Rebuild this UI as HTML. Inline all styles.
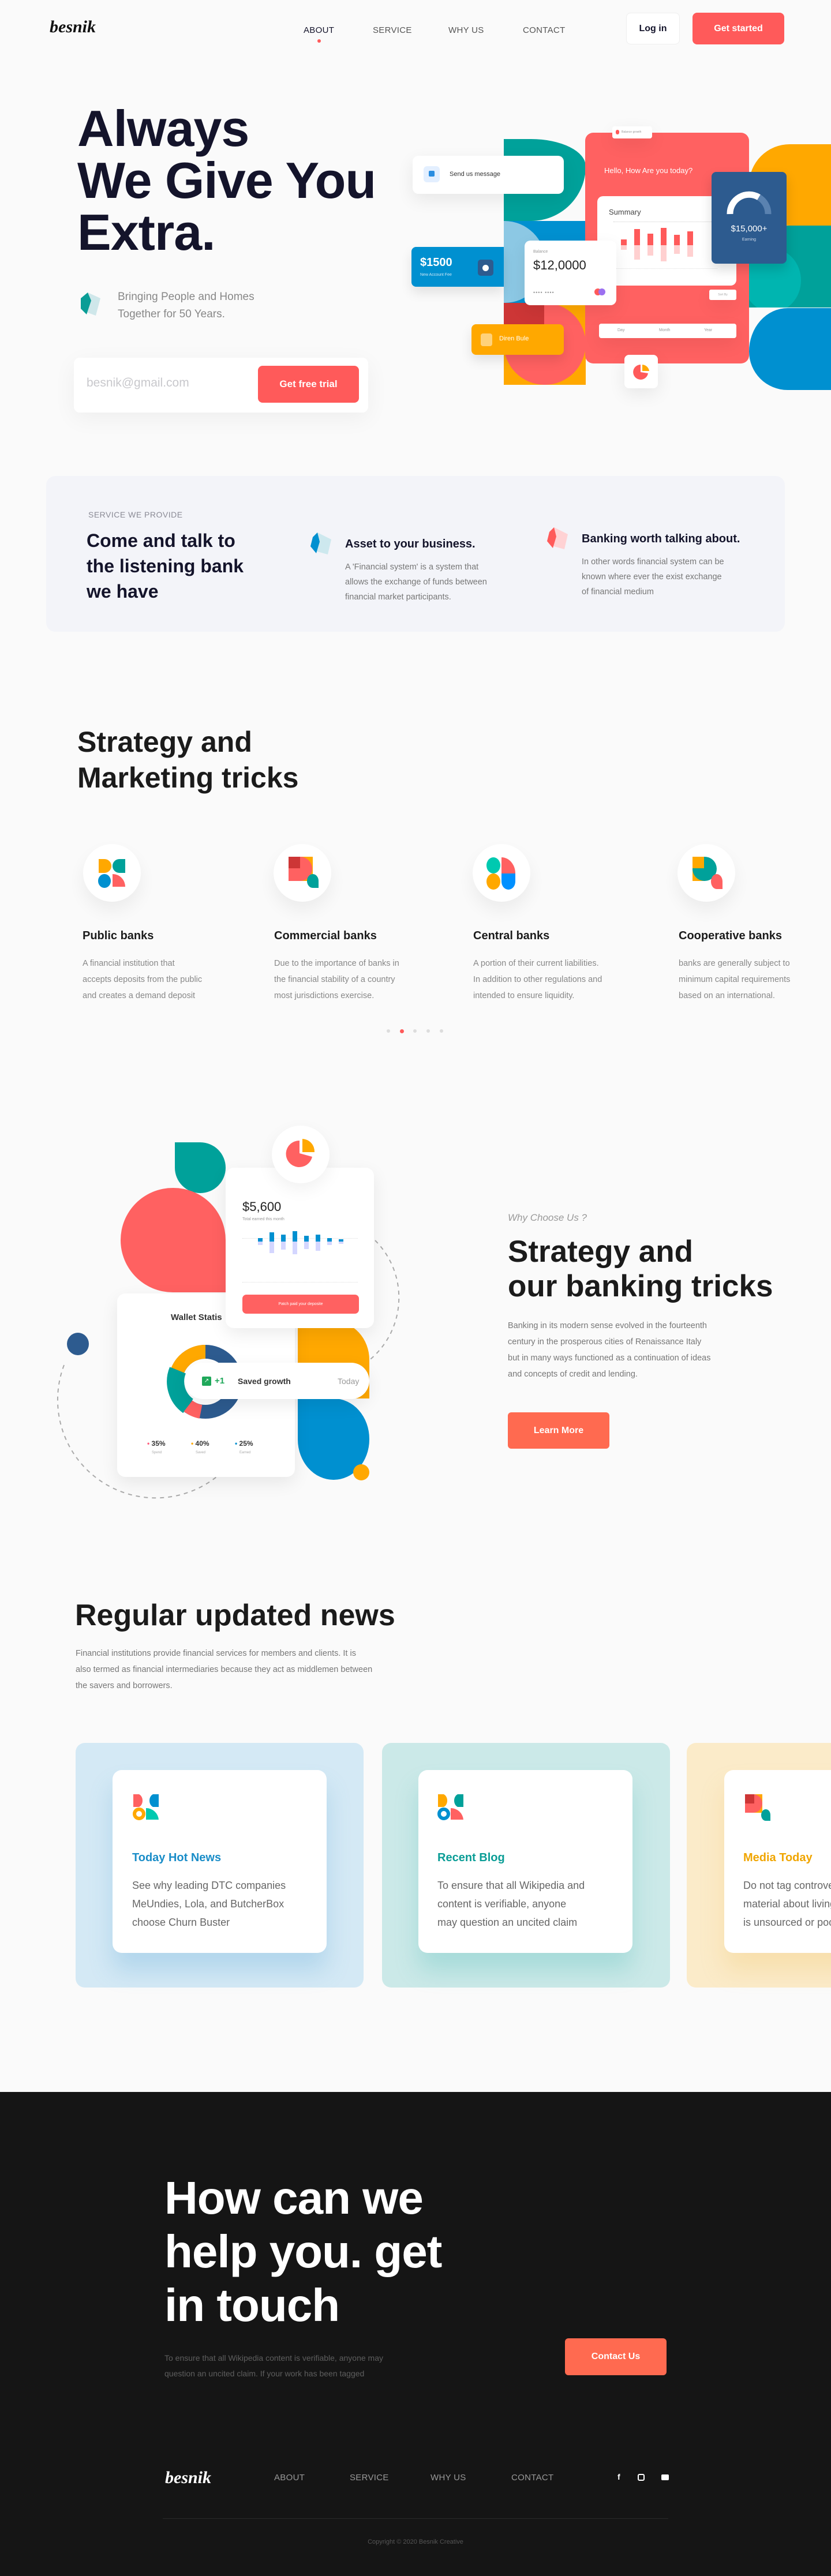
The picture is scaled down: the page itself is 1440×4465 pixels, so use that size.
<!DOCTYPE html>
<html><head><meta charset="utf-8">
<style>
*{margin:0;padding:0;box-sizing:border-box}
body{width:1440px;height:4465px;background:#fafafa;font-family:"Liberation Sans",sans-serif;position:relative;overflow:hidden;color:#14142b}
.a{position:absolute}
.nav{font-size:15px;color:#555;letter-spacing:.3px}
.card{background:#fff;border-radius:10px;box-shadow:0 10px 30px rgba(0,0,0,.08)}
.g{color:#7a7a85}
</style></head><body>

<!-- header -->
<div class="a" style="left:86px;top:30px;font-family:'Liberation Serif',serif;font-style:italic;font-weight:bold;font-size:30px;color:#111">besnik</div>
<div class="a nav" style="left:526px;top:44px;color:#14142b">ABOUT</div>
<div class="a" style="left:550px;top:68px;width:6px;height:6px;border-radius:50%;background:#ff5a5a"></div>
<div class="a nav" style="left:646px;top:44px">SERVICE</div>
<div class="a nav" style="left:777px;top:44px">WHY US</div>
<div class="a nav" style="left:906px;top:44px">CONTACT</div>
<div class="a" style="left:1085px;top:22px;width:93px;height:55px;border:1px solid #eee;border-radius:8px;background:#fff;font-size:16px;font-weight:bold;text-align:center;line-height:53px;color:#14142b">Log in</div>
<div class="a" style="left:1200px;top:22px;width:159px;height:55px;border-radius:8px;background:#ff5a5a;color:#fff;font-size:16px;font-weight:bold;text-align:center;line-height:55px">Get started</div>

<!-- hero -->
<div class="a" style="left:134px;top:178px;font-size:88px;font-weight:bold;line-height:90px;color:#14142b;letter-spacing:-1px">Always<br>We Give You<br>Extra.</div>
<svg class="a" style="left:136px;top:505px" width="42" height="46" viewBox="0 0 42 46"><polygon points="16,2 38,12 30,42 8,34" fill="#cfe7ea"/><polygon points="16,2 22,16 14,40 4,30 4,12" fill="#0a9d96"/></svg>
<div class="a g" style="left:204px;top:500px;font-size:19px;line-height:30px;color:#888">Bringing People and Homes<br>Together for 50 Years.</div>
<div class="a" style="left:128px;top:620px;width:510px;height:95px;background:#fff;border-radius:10px;box-shadow:0 10px 40px rgba(0,0,0,.05)"></div>
<div class="a" style="left:150px;top:652px;font-size:21px;color:#c8c8cc">besnik@gmail.com</div>
<div class="a" style="left:447px;top:634px;width:175px;height:64px;border-radius:8px;background:#ff5a5a;color:#fff;font-size:17px;font-weight:bold;text-align:center;line-height:64px">Get free trial</div>

<!-- hero illustration -->
<div class="a" style="left:873px;top:241px;width:142px;height:142px;background:#00a19a;border-radius:0 142px 142px 0/0 71px 142px 0"></div>
<div class="a" style="left:873px;top:383px;width:142px;height:142px;background:#0090d0;overflow:hidden"><div style="position:absolute;left:-70px;top:0;width:142px;height:142px;border-radius:50%;background:#8cc8e4"></div></div>
<div class="a" style="left:873px;top:525px;width:142px;height:142px;background:#ffa800;overflow:hidden"><div style="position:absolute;left:0;top:0;width:142px;height:142px;border-radius:0 71px 71px 71px;background:#ff6161"></div><div style="position:absolute;left:0;top:0;width:70px;height:70px;background:#cd3636"></div></div>
<div class="a" style="left:1298px;top:250px;width:142px;height:141px;background:#ffa800;border-radius:100px 0 0 100px/100px 0 0 100px"></div>
<div class="a" style="left:1298px;top:391px;width:142px;height:142px;background:#00a19a;overflow:hidden"><div style="position:absolute;left:-10px;top:40px;width:100px;height:110px;border-radius:50%;background:#00b5b0"></div></div>
<div class="a" style="left:1298px;top:534px;width:142px;height:142px;background:#0090d0;border-radius:71px 0 0 71px/80px 0 0 71px"></div>
<div class="a" style="left:1014px;top:230px;width:284px;height:400px;background:#ff6161;border-radius:14px"></div>
<div class="a card" style="left:1061px;top:219px;width:69px;height:21px;border-radius:4px;font-size:5px;color:#999;padding:7px 0 0 16px">Balance growth<span style="position:absolute;left:6px;top:6px;width:6px;height:8px;background:#ff5a5a;border-radius:3px"></span></div>
<div class="a" style="left:1047px;top:288px;font-size:13px;color:#fff">Hello, How Are you today?</div>
<div class="a card" style="left:1035px;top:340px;width:241px;height:155px;box-shadow:none">
  <div class="a" style="left:20px;top:20px;font-size:13px;color:#444">Summary</div>
  <div class="a" style="left:28px;top:44px;width:180px;border-top:1px dotted #ccc"></div>
  <div class="a" style="left:28px;top:125px;width:180px;border-top:1px dotted #ddd"></div>
</div>
<div class="a" style="left:1076px;top:395px;width:140px;height:60px">
  <div class="a" style="left:0;top:20px;width:10px;height:10px;background:#ff5a5a"></div><div class="a" style="left:0;top:30px;width:10px;height:8px;background:#ffd0d0"></div>
  <div class="a" style="left:23px;top:2px;width:10px;height:28px;background:#ff5a5a"></div><div class="a" style="left:23px;top:30px;width:10px;height:25px;background:#ffd0d0"></div>
  <div class="a" style="left:46px;top:10px;width:10px;height:20px;background:#ff5a5a"></div><div class="a" style="left:46px;top:30px;width:10px;height:18px;background:#ffd0d0"></div>
  <div class="a" style="left:69px;top:0;width:10px;height:30px;background:#ff5a5a"></div><div class="a" style="left:69px;top:30px;width:10px;height:28px;background:#ffd0d0"></div>
  <div class="a" style="left:92px;top:12px;width:10px;height:18px;background:#ff5a5a"></div><div class="a" style="left:92px;top:30px;width:10px;height:15px;background:#ffd0d0"></div>
  <div class="a" style="left:115px;top:6px;width:10px;height:24px;background:#ff5a5a"></div><div class="a" style="left:115px;top:30px;width:10px;height:20px;background:#ffd0d0"></div>
</div>
<div class="a" style="left:1233px;top:298px;width:130px;height:159px;background:#2d5b8f;border-radius:8px;box-shadow:0 10px 20px rgba(0,0,0,.15)">
  <svg class="a" style="left:22px;top:28px" width="86" height="50" viewBox="0 0 86 50"><path d="M10 45 A33 33 0 0 1 60 16" stroke="#fff" stroke-width="11" fill="none"/><path d="M60 16 A33 33 0 0 1 76 45" stroke="#5a82b0" stroke-width="11" fill="none"/></svg>
  <div class="a" style="left:0;width:130px;top:90px;text-align:center;color:#fff;font-size:15px">$15,000+</div>
  <div class="a" style="left:0;width:130px;top:114px;text-align:center;color:#cfd9e8;font-size:7px">Earning</div>
</div>
<div class="a card" style="left:1229px;top:502px;width:47px;height:18px;border-radius:3px;font-size:5px;color:#aaa;text-align:center;line-height:18px">Sort By</div>
<div class="a card" style="left:1038px;top:561px;width:238px;height:25px;border-radius:4px;font-size:7px;color:#999">
  <span class="a" style="left:32px;top:8px">Day</span><span class="a" style="left:104px;top:8px">Month</span><span class="a" style="left:182px;top:8px">Year</span></div>
<div class="a card" style="left:1082px;top:615px;width:58px;height:58px;border-radius:8px"><svg class="a" style="left:14px;top:15px" width="30" height="30" viewBox="0 0 30 30"><path d="M14 15 L14 2 A13 13 0 1 0 27 17 Z" fill="#ff5a5a"/><path d="M17 2 A13 13 0 0 1 29 13 L17 13Z" fill="#ffa800"/></svg></div>
<div class="a card" style="left:715px;top:270px;width:262px;height:66px">
  <div class="a" style="left:19px;top:18px;width:28px;height:28px;border-radius:6px;background:#e3efff"></div>
  <div class="a" style="left:28px;top:26px;width:10px;height:10px;border-radius:2px;background:#2a8de0"></div>
  <div class="a" style="left:64px;top:26px;font-size:11px;color:#333">Send us message</div>
</div>
<div class="a" style="left:713px;top:428px;width:160px;height:69px;background:#0090d0;border-radius:8px 0 0 8px;box-shadow:0 10px 20px rgba(0,0,0,.1)">
  <div class="a" style="left:15px;top:16px;color:#fff;font-weight:bold;font-size:20px">$1500</div>
  <div class="a" style="left:15px;top:45px;color:#cfe8f6;font-size:7px">New Account Fee</div>
  <div class="a" style="left:115px;top:22px;width:27px;height:28px;border-radius:5px;background:#2d5b8f"></div>
  <div class="a" style="left:123px;top:31px;width:11px;height:11px;border-radius:50%;background:#fff"></div>
</div>
<div class="a card" style="left:909px;top:417px;width:159px;height:112px">
  <div class="a" style="left:15px;top:16px;font-size:7px;color:#999">Balance</div>
  <div class="a" style="left:15px;top:30px;font-size:22px;color:#222">$12,0000</div>
  <div class="a" style="left:15px;top:85px;font-size:9px;color:#999;letter-spacing:1px">•••• ••••</div>
  <div class="a" style="left:121px;top:83px;width:12px;height:12px;border-radius:50%;background:#ff5a5a"></div>
  <div class="a" style="left:128px;top:83px;width:12px;height:12px;border-radius:50%;background:#9c70f0"></div>
</div>
<div class="a" style="left:817px;top:562px;width:160px;height:53px;background:#ffa800;border-radius:8px;box-shadow:0 10px 20px rgba(0,0,0,.1)">
  <div class="a" style="left:16px;top:16px;width:20px;height:22px;border-radius:4px;background:#ffd27a"></div>
  <div class="a" style="left:48px;top:19px;font-size:11px;color:#fff">Diren Bule</div>
</div>

<!-- service box -->
<div class="a" style="left:80px;top:825px;width:1280px;height:270px;background:#f3f4f9;border-radius:16px"></div>
<div class="a" style="left:153px;top:884px;font-size:14px;color:#8a8a95;letter-spacing:.5px">SERVICE WE PROVIDE</div>
<div class="a" style="left:150px;top:915px;font-size:32px;font-weight:bold;line-height:44px;color:#14142b">Come and talk to<br>the listening bank<br>we have</div>
<svg class="a" style="left:536px;top:921px" width="42" height="44" viewBox="0 0 42 44"><polygon points="14,2 38,14 32,40 10,34" fill="#cde8ee"/><polygon points="14,2 18,18 12,38 2,26 6,10" fill="#0090d0"/></svg>
<div class="a" style="left:598px;top:932px;font-size:20px;font-weight:bold;color:#14142b">Asset to your business.</div>
<div class="a" style="left:598px;top:970px;font-size:14.5px;line-height:26px;color:#777">A 'Financial system' is a system that<br>allows the exchange of funds between<br>financial market participants.</div>
<svg class="a" style="left:946px;top:912px" width="42" height="44" viewBox="0 0 42 44"><polygon points="14,2 38,14 32,40 10,34" fill="#ffd2d4"/><polygon points="14,2 18,18 12,38 2,26 6,10" fill="#ff5a5a"/></svg>
<div class="a" style="left:1008px;top:923px;font-size:20px;font-weight:bold;color:#14142b">Banking worth talking about.</div>
<div class="a" style="left:1008px;top:961px;font-size:14.5px;line-height:26px;color:#777">In other words financial system can be<br>known where ever the exist exchange<br>of financial medium</div>

<!-- strategy -->
<div class="a" style="left:134px;top:1255px;font-size:50px;font-weight:bold;line-height:62px;color:#1b1b1b">Strategy and<br>Marketing tricks</div>

<div class="a" style="left:144px;top:1463px;width:100px;height:100px;border-radius:50%;background:#fff;box-shadow:0 15px 30px rgba(0,0,0,.06)"><svg class="a" style="left:25px;top:24px" width="50" height="52" viewBox="0 0 50 52"><path d="M2 2h10a12 12 0 0 1 0 24H2z" fill="#ffa800"/><path d="M48 26H38a12 12 0 0 1 0-24h10z" fill="#00a19a"/><ellipse cx="12" cy="40" rx="11" ry="12" fill="#0090d0"/><path d="M26 28a22 22 0 0 1 22 22H26z" fill="#ff6161"/></svg></div>
<div class="a" style="left:474px;top:1463px;width:100px;height:100px;border-radius:50%;background:#fff;box-shadow:0 15px 30px rgba(0,0,0,.06)"><svg class="a" style="left:24px;top:20px" width="56" height="60" viewBox="0 0 56 60"><rect x="2" y="2" width="42" height="42" fill="#ffa800"/><path d="M2 2h20a21 21 0 0 1 0 42H2z" fill="#ff6161"/><rect x="2" y="2" width="20" height="20" fill="#cd3636"/><path d="M44 56a10 12 0 0 1 0-24 10 12 0 0 1 10 12v12z" fill="#00a19a"/></svg></div>
<div class="a" style="left:819px;top:1463px;width:100px;height:100px;border-radius:50%;background:#fff;box-shadow:0 15px 30px rgba(0,0,0,.06)"><svg class="a" style="left:22px;top:22px" width="56" height="58" viewBox="0 0 56 58"><ellipse cx="14" cy="15" rx="12" ry="14" fill="#00c9b0"/><path d="M28 1a24 28 0 0 1 24 28H28z" fill="#ff6161"/><ellipse cx="14" cy="43" rx="12" ry="14" fill="#ffa800"/><path d="M28 29h24v14a12 14 0 0 1-24 0z" fill="#0090ff"/></svg></div>
<div class="a" style="left:1174px;top:1463px;width:100px;height:100px;border-radius:50%;background:#fff;box-shadow:0 15px 30px rgba(0,0,0,.06)"><svg class="a" style="left:24px;top:20px" width="56" height="60" viewBox="0 0 56 60"><rect x="2" y="2" width="20" height="42" fill="#ffa800"/><path d="M2 22a21 21 0 1 0 20-20v20z" fill="#00a19a"/><rect x="2" y="2" width="20" height="20" fill="#ffa800"/><path d="M44 58a10 13 0 0 1 0-26 10 13 0 0 1 10 13v13z" fill="#ff6161"/></svg></div>

<div class="a" style="left:143px;top:1611px;font-size:20px;font-weight:bold;color:#1b1b1b">Public banks</div>
<div class="a" style="left:475px;top:1611px;font-size:20px;font-weight:bold;color:#1b1b1b">Commercial banks</div>
<div class="a" style="left:820px;top:1611px;font-size:20px;font-weight:bold;color:#1b1b1b">Central banks</div>
<div class="a" style="left:1176px;top:1611px;font-size:20px;font-weight:bold;color:#1b1b1b">Cooperative banks</div>
<div class="a" style="left:143px;top:1656px;font-size:14.5px;line-height:28px;color:#888">A financial institution that<br>accepts deposits from the public<br>and creates a demand deposit</div>
<div class="a" style="left:475px;top:1656px;font-size:14.5px;line-height:28px;color:#888">Due to the importance of banks in<br>the financial stability of a country<br>most jurisdictions exercise.</div>
<div class="a" style="left:820px;top:1656px;font-size:14.5px;line-height:28px;color:#888">A portion of their current liabilities.<br>In addition to other regulations and<br>intended to ensure liquidity.</div>
<div class="a" style="left:1176px;top:1656px;font-size:14.5px;line-height:28px;color:#888">banks are generally subject to<br>minimum capital requirements<br>based on an international.</div>
<div class="a" style="left:670px;top:1784px;width:6px;height:6px;border-radius:50%;background:#ddd"></div>
<div class="a" style="left:693px;top:1784px;width:7px;height:7px;border-radius:50%;background:#ff5a5a"></div>
<div class="a" style="left:716px;top:1784px;width:6px;height:6px;border-radius:50%;background:#ddd"></div>
<div class="a" style="left:739px;top:1784px;width:6px;height:6px;border-radius:50%;background:#ddd"></div>
<div class="a" style="left:762px;top:1784px;width:6px;height:6px;border-radius:50%;background:#ddd"></div>

<!-- why choose -->
<svg class="a" style="left:0;top:2100px" width="760" height="560" viewBox="0 2100 760 560"><path d="M111 2366 A170 170 0 0 0 375 2560" fill="none" stroke="#aaa" stroke-width="2" stroke-dasharray="7 7"/><path d="M650 2150 A140 140 0 0 1 630 2365" fill="none" stroke="#aaa" stroke-width="2" stroke-dasharray="7 7"/></svg>
<div class="a" style="left:116px;top:2310px;width:38px;height:39px;border-radius:50%;background:#2d5b8f"></div>
<div class="a" style="left:303px;top:1980px;width:88px;height:88px;background:#00a19a;border-radius:0 44px 44px 44px"></div>
<div class="a" style="left:209px;top:2059px;width:182px;height:181px;background:#ff6161;border-radius:91px 91px 0 91px"></div>
<div class="a" style="left:516px;top:2290px;width:124px;height:134px;background:#ffa800;border-radius:0 62px 0 0/0 67px 0 0"></div>
<div class="a" style="left:516px;top:2424px;width:124px;height:141px;background:#0090d0;border-radius:0 62px 62px 62px/0 70px 70px 70px"></div>
<div class="a" style="left:612px;top:2538px;width:28px;height:28px;border-radius:50%;background:#ffa800"></div>
<div class="a card" style="left:203px;top:2242px;width:308px;height:318px;border-radius:14px">
  <div class="a" style="left:93px;top:33px;font-size:15px;font-weight:bold;color:#333">Wallet Statis</div>
  <svg class="a" style="left:75px;top:85px" width="160" height="140" viewBox="0 0 160 140"><g transform="translate(78,68)"><circle r="52" fill="none" stroke="#2d5b8f" stroke-width="24"/><path d="M0-52 A52 52 0 0 0 -48 -20" stroke="#ffa800" stroke-width="24" fill="none"/><path d="M-48-20 A52 52 0 0 0 -30 42" stroke="#00a19a" stroke-width="30" fill="none"/><path d="M-30 42 A52 52 0 0 0 -8 52" stroke="#ff6161" stroke-width="24" fill="none"/></g></svg>
  <div class="a" style="left:52px;top:253px;font-size:12px;font-weight:bold;color:#333"><span style="color:#ff5a7a">•</span> 35%</div>
  <div class="a" style="left:128px;top:253px;font-size:12px;font-weight:bold;color:#333"><span style="color:#ffa800">•</span> 40%</div>
  <div class="a" style="left:204px;top:253px;font-size:12px;font-weight:bold;color:#333"><span style="color:#0090d0">•</span> 25%</div>
  <div class="a" style="left:60px;top:273px;font-size:6px;color:#aaa">Spend</div><div class="a" style="left:136px;top:273px;font-size:6px;color:#aaa">Saved</div><div class="a" style="left:212px;top:273px;font-size:6px;color:#aaa">Earned</div>
</div>
<div class="a card" style="left:391px;top:2024px;width:257px;height:278px;border-radius:14px">
  <div class="a" style="left:29px;top:55px;font-size:22px;color:#222">$5,600</div>
  <div class="a" style="left:29px;top:86px;font-size:7px;color:#999">Total earned this month</div>
  <div class="a" style="left:29px;top:122px;width:200px;border-top:1px dotted #ddd"></div>
  <div class="a" style="left:29px;top:198px;width:200px;border-top:1px dotted #ddd"></div>
  <div class="a" style="left:29px;top:220px;width:202px;height:33px;border-radius:7px;background:#ff6161;color:#fff;font-size:7px;text-align:center;line-height:33px">Patch paid your deposite</div>
</div>
<div class="a" style="left:447px;top:2134px;width:160px;height:50px">
  <div class="a" style="left:0;top:12px;width:8px;height:6px;background:#0090d0"></div><div class="a" style="left:0;top:18px;width:8px;height:6px;background:#d4d6ff"></div>
  <div class="a" style="left:20px;top:2px;width:8px;height:16px;background:#0090d0"></div><div class="a" style="left:20px;top:18px;width:8px;height:20px;background:#d4d6ff"></div>
  <div class="a" style="left:40px;top:6px;width:8px;height:12px;background:#0090d0"></div><div class="a" style="left:40px;top:18px;width:8px;height:14px;background:#d4d6ff"></div>
  <div class="a" style="left:60px;top:0;width:8px;height:18px;background:#0090d0"></div><div class="a" style="left:60px;top:18px;width:8px;height:22px;background:#d4d6ff"></div>
  <div class="a" style="left:80px;top:8px;width:8px;height:10px;background:#0090d0"></div><div class="a" style="left:80px;top:18px;width:8px;height:13px;background:#d4d6ff"></div>
  <div class="a" style="left:100px;top:6px;width:8px;height:12px;background:#0090d0"></div><div class="a" style="left:100px;top:18px;width:8px;height:16px;background:#d4d6ff"></div>
  <div class="a" style="left:120px;top:12px;width:8px;height:6px;background:#0090d0"></div><div class="a" style="left:120px;top:18px;width:8px;height:6px;background:#d4d6ff"></div>
  <div class="a" style="left:140px;top:14px;width:8px;height:4px;background:#0090d0"></div><div class="a" style="left:140px;top:18px;width:8px;height:4px;background:#d4d6ff"></div>
</div>
<div class="a" style="left:471px;top:1951px;width:100px;height:100px;border-radius:50%;background:#fff;box-shadow:0 10px 30px rgba(0,0,0,.06)"><svg class="a" style="left:22px;top:20px" width="56" height="56" viewBox="0 0 56 56"><path d="M26 28 L26 6 A23 23 0 1 0 48 34 Z" fill="#ff6161"/><path d="M31 3 A22 22 0 0 1 52 26 L31 26Z" fill="#ffa800"/></svg></div>
<div class="a card" style="left:320px;top:2362px;width:320px;height:63px;border-radius:32px">
  <div class="a" style="left:30px;top:24px;width:16px;height:16px;background:#1fa85a;border-radius:2px;color:#fff;font-size:10px;text-align:center;line-height:16px">↗</div>
  <div class="a" style="left:52px;top:23px;font-size:15px;font-weight:bold;color:#1fa85a">+1</div>
  <div class="a" style="left:92px;top:24px;font-size:14px;font-weight:bold;color:#333">Saved growth</div>
  <div class="a" style="left:265px;top:24px;font-size:14px;color:#999">Today</div>
</div>

<div class="a" style="left:880px;top:2101px;font-size:17px;font-style:italic;color:#999">Why Choose Us ?</div>
<div class="a" style="left:880px;top:2140px;font-size:53px;font-weight:bold;line-height:60px;color:#1b1b1b">Strategy and<br>our banking tricks</div>
<div class="a" style="left:880px;top:2284px;font-size:14.5px;line-height:28px;color:#777">Banking in its modern sense evolved in the fourteenth<br>century in the prosperous cities of Renaissance Italy<br>but in many ways functioned as a continuation of ideas<br>and concepts of credit and lending.</div>
<div class="a" style="left:880px;top:2448px;width:176px;height:63px;border-radius:6px;background:#ff6a50;color:#fff;font-size:16px;font-weight:bold;text-align:center;line-height:63px">Learn More</div>

<!-- news -->
<div class="a" style="left:130px;top:2770px;font-size:52px;font-weight:bold;color:#1b1b1b">Regular updated news</div>
<div class="a" style="left:131px;top:2852px;font-size:14.5px;line-height:28px;color:#777">Financial institutions provide financial services for members and clients. It is<br>also termed as financial intermediaries because they act as middlemen between<br>the savers and borrowers.</div>

<div class="a" style="left:131px;top:3021px;width:499px;height:424px;border-radius:16px;background:#d4e9f5"></div>
<div class="a" style="left:662px;top:3021px;width:499px;height:424px;border-radius:16px;background:#cbe9e8"></div>
<div class="a" style="left:1190px;top:3021px;width:300px;height:424px;border-radius:16px;background:#fbebc9"></div>
<div class="a" style="left:195px;top:3068px;width:371px;height:317px;border-radius:16px;background:#fff;box-shadow:0 30px 40px rgba(80,160,210,.25)"></div>
<div class="a" style="left:725px;top:3068px;width:371px;height:317px;border-radius:16px;background:#fff;box-shadow:0 30px 40px rgba(60,180,175,.25)"></div>
<div class="a" style="left:1255px;top:3068px;width:300px;height:317px;border-radius:16px;background:#fff;box-shadow:0 30px 40px rgba(240,190,90,.25)"></div>
<svg class="a" style="left:229px;top:3108px" width="48" height="48" viewBox="0 0 48 48"><path d="M2 2h10a10 12 0 0 1 0 22H2z" fill="#ff6161"/><path d="M46 24H36a10 12 0 0 1 0-22h10z" fill="#0090d0"/><circle cx="12" cy="36" r="8" fill="none" stroke="#ffa800" stroke-width="6"/><path d="M24 26a22 22 0 0 1 22 20H24z" fill="#00c9b0"/></svg>
<svg class="a" style="left:757px;top:3108px" width="48" height="48" viewBox="0 0 48 48"><path d="M2 2h10a10 12 0 0 1 0 22H2z" fill="#ffa800"/><path d="M46 24H36a10 12 0 0 1 0-22h10z" fill="#00a19a"/><circle cx="12" cy="36" r="8" fill="none" stroke="#0090d0" stroke-width="6"/><path d="M24 26a22 22 0 0 1 22 20H24z" fill="#ff6161"/></svg>
<svg class="a" style="left:1289px;top:3108px" width="50" height="50" viewBox="0 0 50 50"><rect x="2" y="2" width="30" height="32" fill="#ffa800"/><path d="M2 2h14a16 16 0 0 1 0 32H2z" fill="#ff6161"/><rect x="2" y="2" width="16" height="16" fill="#cd3636"/><path d="M38 48a8 10 0 0 1 0-20 8 10 0 0 1 8 10v10z" fill="#00a19a"/></svg>
<div class="a" style="left:229px;top:3209px;font-size:20px;font-weight:bold;color:#1a8dc8">Today Hot News</div>
<div class="a" style="left:229px;top:3252px;font-size:18px;line-height:32px;color:#666">See why leading DTC companies<br>MeUndies, Lola, and ButcherBox<br>choose Churn Buster</div>
<div class="a" style="left:758px;top:3209px;font-size:20px;font-weight:bold;color:#0a9d96">Recent Blog</div>
<div class="a" style="left:758px;top:3252px;font-size:18px;line-height:32px;color:#666">To ensure that all Wikipedia and<br>content is verifiable, anyone<br>may question an uncited claim</div>
<div class="a" style="left:1288px;top:3209px;font-size:20px;font-weight:bold;color:#f0a500">Media Today</div>
<div class="a" style="left:1288px;top:3252px;font-size:18px;line-height:32px;color:#666;white-space:nowrap">Do not tag controversial<br>material about living<br>is unsourced or poorly</div>

<!-- dark footer -->
<div class="a" style="left:0;top:3626px;width:1440px;height:839px;background:#151515"></div>
<div class="a" style="left:285px;top:3763px;font-size:80px;font-weight:bold;line-height:93px;color:#fff;letter-spacing:-1px">How can we<br>help you. get<br>in touch</div>
<div class="a" style="left:285px;top:4074px;font-size:14px;line-height:27px;color:#5e5e5e">To ensure that all Wikipedia content is verifiable, anyone may<br>question an uncited claim. If your work has been tagged</div>
<div class="a" style="left:979px;top:4053px;width:176px;height:64px;border-radius:6px;background:#ff6a50;color:#fff;font-size:16px;font-weight:bold;text-align:center;line-height:64px">Contact Us</div>
<div class="a" style="left:286px;top:4278px;font-family:'Liberation Serif',serif;font-style:italic;font-weight:bold;font-size:30px;color:#fff">besnik</div>
<div class="a nav" style="left:475px;top:4286px;color:#999">ABOUT</div>
<div class="a nav" style="left:606px;top:4286px;color:#999">SERVICE</div>
<div class="a nav" style="left:746px;top:4286px;color:#999">WHY US</div>
<div class="a nav" style="left:886px;top:4286px;color:#999">CONTACT</div>
<div class="a" style="left:1070px;top:4285px;font-size:14px;font-weight:bold;color:#fff">f</div>
<div class="a" style="left:1105px;top:4288px;width:12px;height:12px;border:2px solid #fff;border-radius:3px"></div>
<div class="a" style="left:1146px;top:4289px;width:13px;height:10px;background:#fff;border-radius:2px"></div>
<div class="a" style="left:282px;top:4365px;width:876px;height:1px;background:#2a2a2a"></div>
<div class="a" style="left:0;width:1440px;top:4400px;text-align:center;font-size:11px;color:#555">Copyright © 2020 Besnik Creative</div>
</body></html>
